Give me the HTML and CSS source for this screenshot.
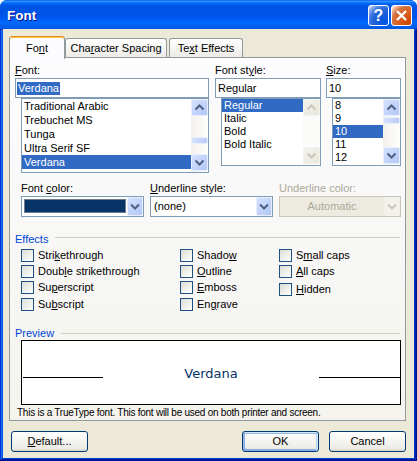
FILE: index.html
```html
<!DOCTYPE html>
<html>
<head>
<meta charset="utf-8">
<title>Font</title>
<link rel="stylesheet" href="styles.css">
</head>
<body>
<div class="window">
  <div class="titlebar">
    <span class="title">Font</span>
    <div class="tb-buttons">
      <div class="tb-btn help">?</div>
      <div class="tb-btn close"><svg width="19" height="19" viewBox="0 0 19 19"><path d="M5 5 L14 14 M14 5 L5 14" stroke="#fff" stroke-width="2.4" fill="none"/></svg></div>
    </div>
  </div>
  <div class="frame">
    <div class="client">
      <div class="tabs">
        <div class="tab active">Fo<u>n</u>t</div>
        <div class="tab t2">Cha<u>r</u>acter Spacing</div>
        <div class="tab t3">Te<u>x</u>t Effects</div>
      </div>
      <div class="panel">
        <div class="row-a">
          <div class="col c1">
            <div class="lbl"><u>F</u>ont:</div>
            <div class="input"><span class="val sel">Verdana</span></div>
            <div class="list l1">
              <div class="items">
                <div class="item">Traditional Arabic</div>
                <div class="item">Trebuchet MS</div>
                <div class="item">Tunga</div>
                <div class="item">Ultra Serif SF</div>
                <div class="item selected">Verdana</div>
              </div>
              <div class="sbar">
                <div class="sbtn"><svg width="15" height="15" viewBox="0 0 15 15"><path d="M3.5 9.5 L7.5 5.5 L11.5 9.5" stroke="#4D6185" stroke-width="2" fill="none"/></svg></div>
                <div class="track"><div class="thumb t1"></div></div>
                <div class="sbtn"><svg width="15" height="15" viewBox="0 0 15 15"><path d="M3.5 5.5 L7.5 9.5 L11.5 5.5" stroke="#4D6185" stroke-width="2" fill="none"/></svg></div>
              </div>
            </div>
          </div>
          <div class="col c2">
            <div class="lbl">Font st<u>y</u>le:</div>
            <div class="input"><span class="val">Regular</span></div>
            <div class="list l2">
              <div class="items">
                <div class="item selected">Regular</div>
                <div class="item">Italic</div>
                <div class="item">Bold</div>
                <div class="item">Bold Italic</div>
              </div>
              <div class="sbar disabled">
                <div class="sbtn"><svg width="15" height="15" viewBox="0 0 15 15"><path d="M3.5 9.5 L7.5 5.5 L11.5 9.5" stroke="#C9C7BA" stroke-width="2" fill="none"/></svg></div>
                <div class="track"></div>
                <div class="sbtn"><svg width="15" height="15" viewBox="0 0 15 15"><path d="M3.5 5.5 L7.5 9.5 L11.5 5.5" stroke="#C9C7BA" stroke-width="2" fill="none"/></svg></div>
              </div>
            </div>
          </div>
          <div class="col c3">
            <div class="lbl"><u>S</u>ize:</div>
            <div class="input"><span class="val">10</span></div>
            <div class="list l3">
              <div class="items">
                <div class="item">8</div>
                <div class="item">9</div>
                <div class="item selected">10</div>
                <div class="item">11</div>
                <div class="item">12</div>
              </div>
              <div class="sbar">
                <div class="sbtn"><svg width="15" height="15" viewBox="0 0 15 15"><path d="M3.5 9.5 L7.5 5.5 L11.5 9.5" stroke="#4D6185" stroke-width="2" fill="none"/></svg></div>
                <div class="track"><div class="thumb t3"></div></div>
                <div class="sbtn"><svg width="15" height="15" viewBox="0 0 15 15"><path d="M3.5 5.5 L7.5 9.5 L11.5 5.5" stroke="#4D6185" stroke-width="2" fill="none"/></svg></div>
              </div>
            </div>
          </div>
        </div>

        <div class="row-b">
          <div class="bcol w1">
            <div class="lbl">Font <u>c</u>olor:</div>
            <div class="combo">
              <div class="combo-text"><div class="swatch"></div></div>
              <div class="dd"><svg width="14" height="17" viewBox="0 0 14 17"><path d="M3 6.5 L7 10.5 L11 6.5" stroke="#4D6185" stroke-width="2" fill="none"/></svg></div>
            </div>
          </div>
          <div class="bcol w2">
            <div class="lbl"><u>U</u>nderline style:</div>
            <div class="combo">
              <div class="combo-text txt">(none)</div>
              <div class="dd"><svg width="14" height="17" viewBox="0 0 14 17"><path d="M3 6.5 L7 10.5 L11 6.5" stroke="#4D6185" stroke-width="2" fill="none"/></svg></div>
            </div>
          </div>
          <div class="bcol w3">
            <div class="lbl dis">Underline color:</div>
            <div class="combo disabled">
              <div class="combo-text txt center">Automatic</div>
              <div class="dd"><svg width="14" height="17" viewBox="0 0 14 17"><path d="M3 6.5 L7 10.5 L11 6.5" stroke="#C9C7BA" stroke-width="2" fill="none"/></svg></div>
            </div>
          </div>
        </div>

        <div class="group-hdr effects-hdr">
          <span class="group-title">Effects</span>
          <span class="group-line"></span>
        </div>

        <div class="effects">
          <div class="chk"><span class="cb"></span><span>Stri<u>k</u>ethrough</span></div>
          <div class="chk"><span class="cb"></span><span>Doub<u>l</u>e strikethrough</span></div>
          <div class="chk"><span class="cb"></span><span>Su<u>p</u>erscript</span></div>
          <div class="chk"><span class="cb"></span><span>Su<u>b</u>script</span></div>
          <div class="chk"><span class="cb"></span><span>Shado<u>w</u></span></div>
          <div class="chk"><span class="cb"></span><span><u>O</u>utline</span></div>
          <div class="chk"><span class="cb"></span><span><u>E</u>mboss</span></div>
          <div class="chk"><span class="cb"></span><span>En<u>g</u>rave</span></div>
          <div class="chk"><span class="cb"></span><span>S<u>m</u>all caps</span></div>
          <div class="chk"><span class="cb"></span><span><u>A</u>ll caps</span></div>
          <div class="chk hidden-row"><span class="cb"></span><span><u>H</u>idden</span></div>
        </div>

        <div class="group-hdr preview-hdr">
          <span class="group-title">Preview</span>
          <span class="group-line"></span>
        </div>

        <div class="preview">
          <div class="preview-row">
            <span class="pline left"></span>
            <span class="ptext">Verdana</span>
            <span class="pline right"></span>
          </div>
        </div>
        <div class="info">This is a TrueType font. This font will be used on both printer and screen.</div>
      </div>

      <div class="buttons">
        <div class="btn"><u>D</u>efault...</div>
        <div class="btn default ok">OK</div>
        <div class="btn cancel">Cancel</div>
      </div>
    </div>
  </div>
</div>
</body>
</html>
```

FILE: styles.css
```css
* { box-sizing: border-box; }

html, body {
  margin: 0;
  padding: 0;
  background: #ffffff;
}

body {
  font-family: "Liberation Sans", Arial, sans-serif;
  font-size: 11px;
  color: #000;
}

u {
  text-decoration: underline;
  text-underline-offset: 1px;
}

.window {
  width: 417px;
  height: 461px;
  display: flex;
  flex-direction: column;
  background: #0831D9;
  border-radius: 7px 7px 0 0;
  overflow: hidden;
}

/* ---------- title bar ---------- */
.titlebar {
  height: 29px;
  flex: none;
  display: flex;
  justify-content: space-between;
  align-items: flex-start;
  padding: 0 5px 0 7px;
  background: linear-gradient(to bottom,
    #0058EE 0%, #3A93FF 4%, #288EFF 6%, #127DFF 8%, #036FFC 10%,
    #0262EE 14%, #0057E5 20%, #0054E3 24%, #0055EB 56%, #005BF5 66%,
    #026AFE 76%, #0062EF 86%, #0058E6 100%);
}

.title {
  margin-top: 8px;
  font-weight: bold;
  font-size: 13.5px;
  line-height: 15px;
  color: #fff;
  text-shadow: 1px 1px #0F1089;
}

.tb-buttons {
  display: flex;
  gap: 2px;
  margin-top: 5px;
}

.tb-btn {
  width: 21px;
  height: 21px;
  border: 1px solid #fff;
  border-radius: 3px;
  display: flex;
  align-items: center;
  justify-content: center;
  color: #fff;
}

.help {
  background: radial-gradient(circle at 90% 90%, #0054E9 0%, #2263D5 55%, #4479E4 70%, #A3BBEC 90%, #fff 100%);
  font-weight: bold;
  font-size: 16px;
  line-height: 19px;
}

.close {
  background: radial-gradient(circle at 90% 90%, #CC4600 0%, #DC6527 55%, #CD7546 70%, #FFCCB2 90%, #fff 100%);
}

/* ---------- frame / client ---------- */
.frame {
  flex: 1;
  padding: 0 3px 3px 3px;
  background: #0831D9;
  box-shadow: inset -1px -1px #00138C, inset 1px 1px #0831D9,
              inset -2px -2px #001EA0, inset 2px 2px #166AEE,
              inset -3px -3px #003BDA, inset 3px 3px #0855DD;
}

.client {
  height: 100%;
  background: #ECE9D8;
  padding-top: 7px;
}

/* ---------- tabs ---------- */
.tabs {
  display: flex;
  align-items: flex-end;
  height: 21px;
  margin-left: 6px;
}

.tab {
  position: relative;
  height: 19px;
  border: 1px solid #919B9C;
  border-bottom: none;
  border-radius: 3px 3px 0 0;
  background: linear-gradient(#FFFFFF, #ECEBE6);
  text-align: center;
  padding-top: 3px;
  line-height: 13px;
  white-space: nowrap;
}

.tab.active {
  z-index: 2;
  width: 56px;
  height: 23px;
  margin-bottom: -2px;
  border-top: 1px solid #E68B2C;
  box-shadow: inset 0 1px #FFC83C;
  background: #FCFCFE;
  padding-top: 5px;
}

.tab.t2 { width: 102px; }
.tab.t3 { width: 74px; margin-left: 2px; }

/* ---------- panel ---------- */
.panel {
  position: relative;
  z-index: 1;
  margin-left: 6px;
  width: 397px;
  height: 364px;
  border: 1px solid #919B9C;
  background: linear-gradient(#FCFCFE, #F4F3EE);
  padding-top: 5px;
  display: flex;
  flex-direction: column;
}

.lbl {
  height: 14px;
  line-height: 14px;
  margin-bottom: 1px;
  white-space: nowrap;
}

.lbl.dis { color: #ACA899; }

.row-a {
  display: flex;
  align-items: flex-start;
  padding-left: 5px;
}

.col { display: flex; flex-direction: column; }
.c1 { width: 194px; }
.c2 { width: 106px; margin-left: 6px; }
.c3 { width: 75px; margin-left: 5px; }

.input {
  height: 20px;
  border: 1px solid #7F9DB9;
  background: #fff;
  padding-left: 1px;
  display: flex;
  align-items: center;
}

.val {
  padding: 0 1px;
  line-height: 13px;
  white-space: nowrap;
}

.val.sel {
  background: #316AC5;
  color: #fff;
}

.list {
  margin-left: 6px;
  border: 1px solid #7F9DB9;
  background: #fff;
  display: flex;
}

.l1 { width: 188px; height: 75px; }
.l2 { width: 100px; height: 68px; }
.l3 { width: 69px; height: 68px; }

.items {
  flex: 1;
  overflow: hidden;
}

.item {
  height: 13px;
  line-height: 13px;
  padding-left: 2px;
  white-space: nowrap;
}

.l1 .item {
  height: 14px;
  line-height: 14px;
}

.item.selected {
  background: #316AC5;
  color: #fff;
}

/* scrollbar */
.sbar {
  width: 17px;
  display: flex;
  flex-direction: column;
  background: linear-gradient(to right, #F3F1EC, #FEFEFB);
  padding-bottom: 1px;
}

.sbtn {
  height: 17px;
  flex: none;
  border: 1px solid #E8EEFD;
  border-radius: 2px;
  background: linear-gradient(135deg, #D5E1FD 0%, #C3D4FB 50%, #B3C8F7 100%);
  display: flex;
  align-items: center;
  justify-content: center;
}

.sbar.disabled {
  background: #FBFBF9;
}

.sbar.disabled .sbtn {
  border-color: #F3F2EC;
  background: linear-gradient(135deg, #F3F2EC, #E9E8DE);
}

.track {
  flex: 1;
}

.thumb {
  height: 7px;
  border: 1px solid #E8EEFD;
  border-radius: 2px;
  background: linear-gradient(to right, #D5E1FD, #BACDF8);
}

.thumb.t1 { margin-top: 21px; }
.thumb.t3 { margin-top: 1px; }

/* ---------- row B ---------- */
.row-b {
  display: flex;
  padding-left: 11px;
  margin-top: 8px;
}

.bcol { display: flex; flex-direction: column; }
.w1 { width: 123px; }
.w2 { width: 123px; margin-left: 6px; }
.w3 { width: 122px; margin-left: 6px; }

.combo {
  height: 21px;
  border: 1px solid #7F9DB9;
  background: #fff;
  display: flex;
}

.combo-text {
  flex: 1;
  display: flex;
  align-items: center;
  white-space: nowrap;
}

.combo-text.txt { padding-left: 3px; line-height: 13px; }
.combo-text.center { justify-content: center; padding-left: 0; }

.swatch {
  flex: 1;
  height: 14px;
  margin: 0 1px 1px 2px;
  background: #063466;
  border: 1px solid #6E7C8E;
}

.dd {
  width: 16px;
  flex: none;
  border: 1px solid #E8EEFD;
  border-radius: 2px;
  background: linear-gradient(135deg, #D5E1FD 0%, #C3D4FB 50%, #B3C8F7 100%);
  display: flex;
  align-items: center;
  justify-content: center;
}

.combo.disabled {
  border-color: #C9C7BA;
  background: #EDEBE1;
  color: #ACA899;
}

.combo.disabled .dd {
  border-color: #F1F0EA;
  background: #F2F1EB;
}

/* ---------- group headers ---------- */
.group-hdr {
  display: flex;
  align-items: flex-start;
  padding: 0 5px;
}

.group-title {
  color: #0046D5;
  white-space: nowrap;
}

.group-line {
  flex: 1;
  height: 1px;
  background: #D0D0BF;
  margin-left: 7px;
}

.effects-hdr {
  margin-top: 15px;
  height: 14px;
  line-height: 14px;
}

.effects-hdr .group-line { margin-top: 5px; }

.preview-hdr {
  margin-top: 12px;
  height: 13px;
  line-height: 13px;
}

.preview-hdr .group-line { margin-top: 6px; }

/* ---------- effects ---------- */
.effects {
  display: grid;
  grid-template-columns: 159px 99px 1fr;
  grid-template-rows: 16px 16px 17px 17px;
  grid-auto-flow: column;
  padding-left: 11px;
  margin-top: 3px;
}

.chk {
  display: flex;
  align-items: flex-start;
  line-height: 13px;
  white-space: nowrap;
}

.chk.hidden-row { margin-top: 2px; }

.cb {
  width: 13px;
  height: 13px;
  flex: none;
  margin-right: 4px;
  border: 1px solid #1C5180;
  background: linear-gradient(135deg, #DCDCD7 0%, #FFFFFF 100%);
}

/* ---------- preview ---------- */
.preview {
  margin-left: 11px;
  width: 380px;
  height: 65px;
  border: 1px solid #000;
  background: #fff;
}

.preview-row {
  display: flex;
  align-items: baseline;
  padding-top: 26px;
}

.pline {
  height: 1px;
  background: #000;
}

.pline.left { width: 80px; margin-left: 1px; }
.pline.right { width: 81px; }

.ptext {
  flex: 1;
  text-align: center;
  font-family: "DejaVu Sans", Verdana, sans-serif;
  font-size: 13px;
  line-height: 13px;
  color: #063466;
}

.info {
  margin-top: 1px;
  padding-left: 7px;
  font-size: 10px;
  letter-spacing: -0.25px;
  line-height: 13px;
  white-space: nowrap;
}

/* ---------- buttons ---------- */
.buttons {
  display: flex;
  margin-top: 10px;
  padding: 0 8px;
}

.btn {
  width: 77px;
  height: 21px;
  border: 1px solid #003C74;
  border-radius: 3px;
  background: linear-gradient(180deg, #FFFFFF 0%, #ECEBE5 86%, #D8D0C4 100%);
  display: flex;
  align-items: center;
  justify-content: center;
  line-height: 13px;
  white-space: nowrap;
}

.btn.ok { margin-left: auto; }
.btn.cancel { margin-left: 10px; }

.btn.default {
  box-shadow: inset -1px 1px #CEE7FF, inset 1px 2px #98B8EA,
              inset -2px 2px #BCD4F6, inset 1px -1px #89ADE4,
              inset 2px -2px #89ADE4;
}
```
